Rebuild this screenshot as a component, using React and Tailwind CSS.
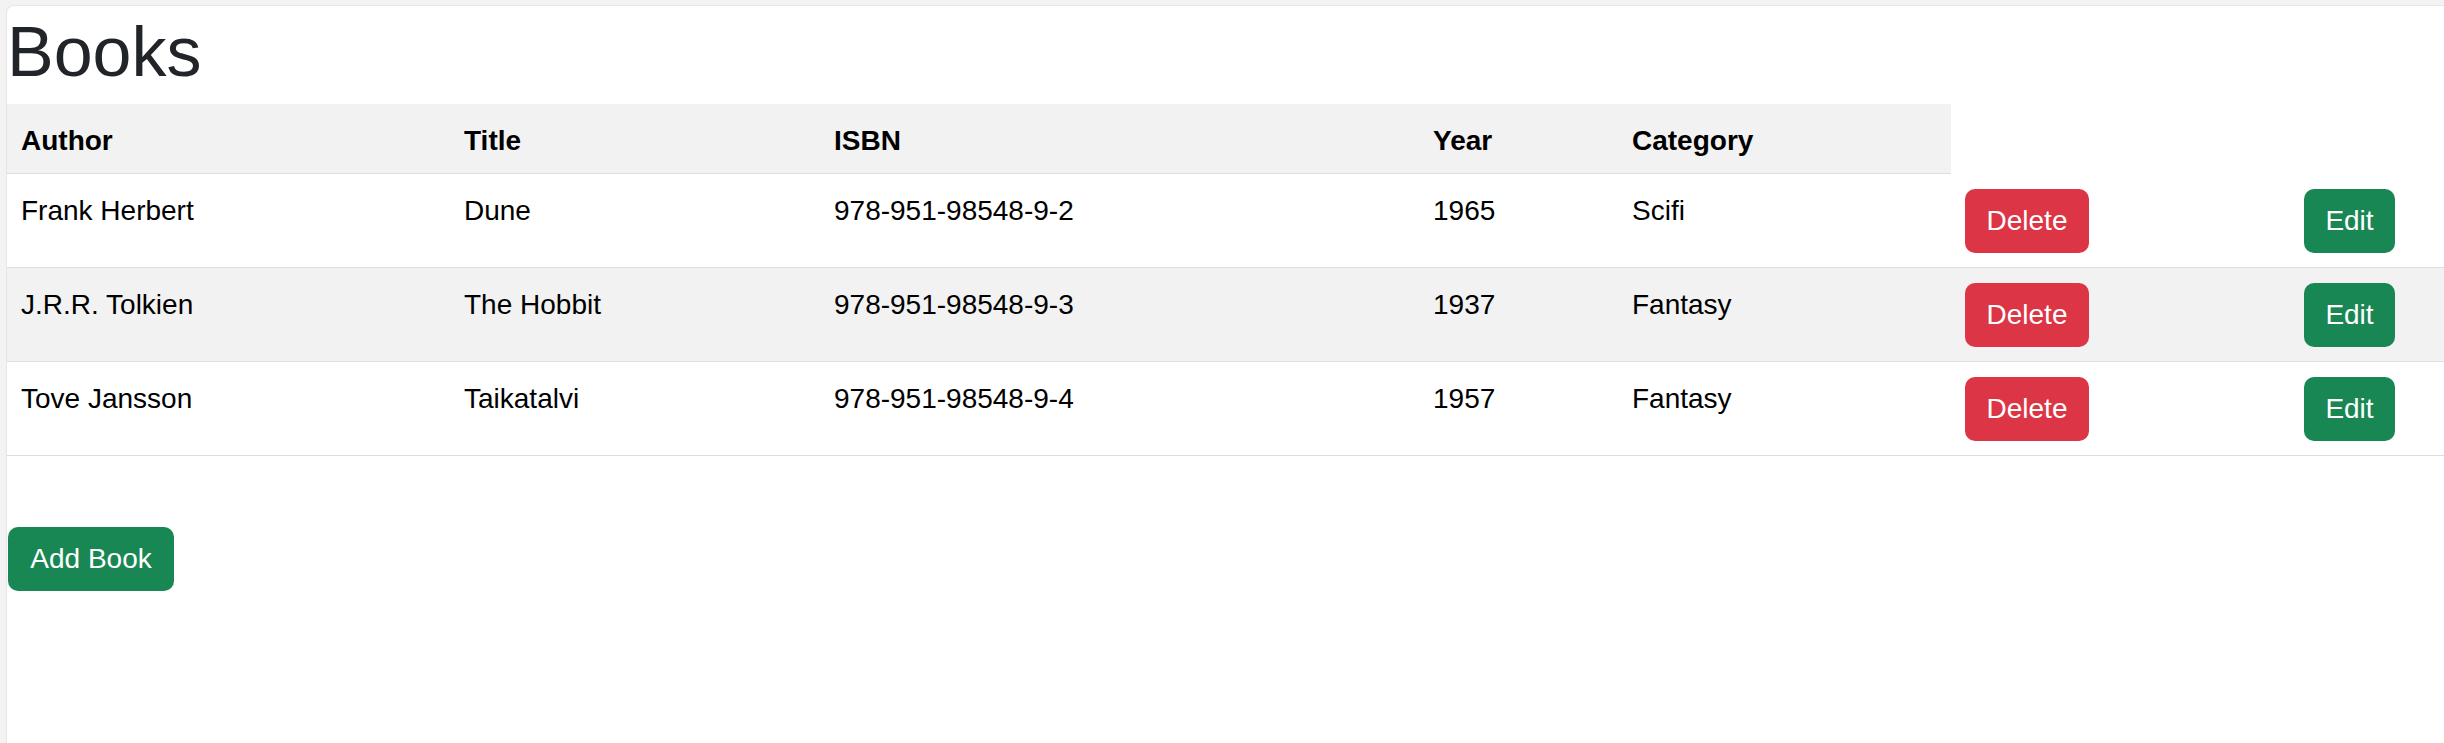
import React from "react";

const books = [
  { author: "Frank Herbert", title: "Dune", isbn: "978-951-98548-9-2", year: "1965", category: "Scifi" },
  { author: "J.R.R. Tolkien", title: "The Hobbit", isbn: "978-951-98548-9-3", year: "1937", category: "Fantasy" },
  { author: "Tove Jansson", title: "Taikatalvi", isbn: "978-951-98548-9-4", year: "1957", category: "Fantasy" },
];

const font = { fontFamily: '"Liberation Sans", Arial, sans-serif' };

export default function App() {
  return (
    <div className="h-[743px] w-full bg-[#f3f3f3] pl-[6px] pt-[5px] overflow-hidden" style={font}>
      <div className="h-full w-full bg-white border-l border-t border-[#e6e6e6] rounded-tl-[8px] overflow-hidden">
        <h1 className="m-0 mb-[5px] text-[70px] leading-[93px] font-normal text-[#212529]">Books</h1>
        <table className="table-fixed border-collapse w-[2438px] text-[28px] text-black">
          <colgroup>
            <col className="w-[443px]" />
            <col className="w-[370px]" />
            <col className="w-[599px]" />
            <col className="w-[199px]" />
            <col className="w-[333px]" />
            <col className="w-[340px]" />
            <col className="w-[154px]" />
          </colgroup>
          <thead>
            <tr>
              {["Author", "Title", "ISBN", "Year", "Category"].map((h) => (
                <th
                  key={h}
                  className="bg-[#f2f2f2] border-b border-[#dedede] text-left align-top font-bold px-[14px] pt-[16px] pb-[11px] leading-[42px]"
                >
                  {h}
                </th>
              ))}
              <th className="p-0"></th>
              <th className="p-0"></th>
            </tr>
          </thead>
          <tbody>
            {books.map((b, i) => (
              <tr key={b.isbn} className={i === 1 ? "bg-[#f2f2f2]" : "bg-white"}>
                {[b.author, b.title, b.isbn, b.year, b.category].map((v, j) => (
                  <td key={j} className="border-b border-[#dedede] align-top px-[14px] pt-[16px] leading-[42px]">
                    {v}
                  </td>
                ))}
                <td className="border-b border-[#dedede] align-top pl-[14px] pt-[15px] pb-[14px]">
                  <button className="w-[124px] h-[64px] leading-[64px] rounded-[10px] bg-[#dc3545] text-white text-[28px] text-center">
                    Delete
                  </button>
                </td>
                <td className="border-b border-[#dedede] align-top pl-[13px] pt-[15px] pb-[14px]">
                  <button className="w-[91px] h-[64px] leading-[64px] rounded-[10px] bg-[#198754] text-white text-[28px] text-center">
                    Edit
                  </button>
                </td>
              </tr>
            ))}
          </tbody>
        </table>
        <div className="pt-[71px] pl-[1px]">
          <button className="w-[166px] h-[64px] leading-[64px] rounded-[10px] bg-[#198754] text-white text-[28px] text-center">
            Add Book
          </button>
        </div>
      </div>
    </div>
  );
}
